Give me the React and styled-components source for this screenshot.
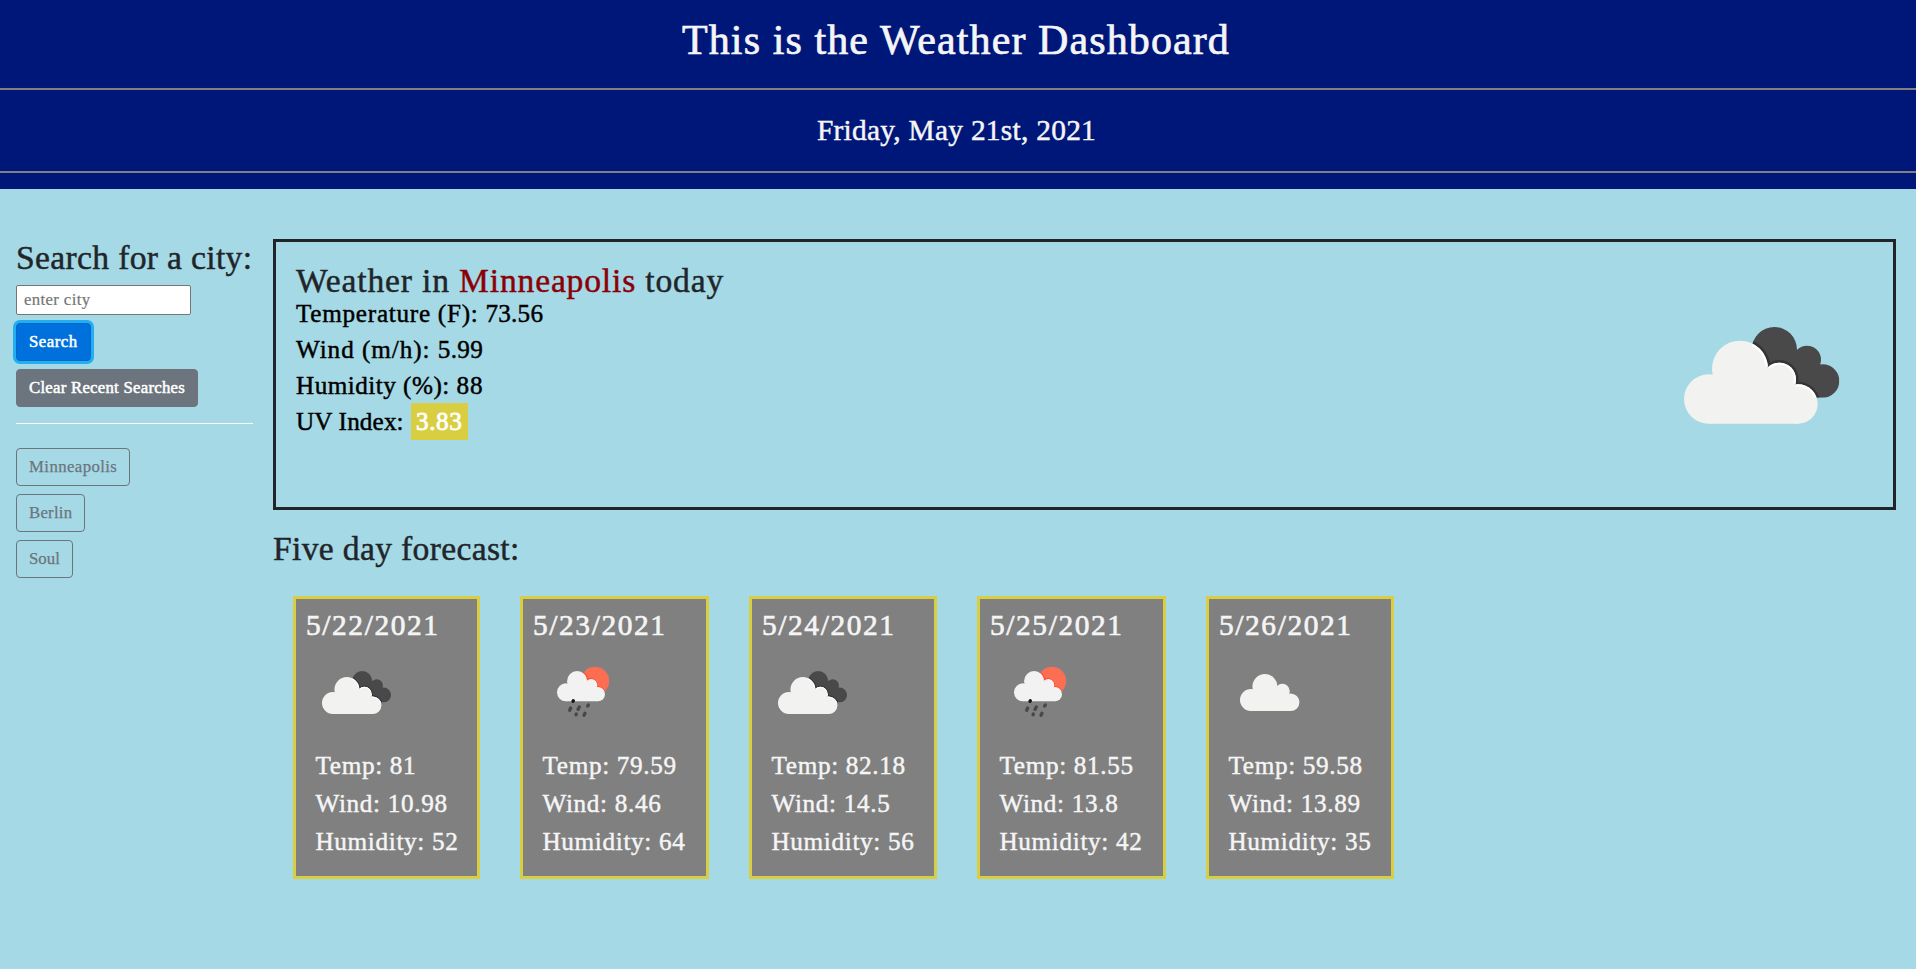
import React from 'react';
import styled, { createGlobalStyle } from 'styled-components';

const GlobalStyle = createGlobalStyle`
  *, *::before, *::after { box-sizing: border-box; }
  body {
    margin: 0;
    min-height: 100vh;
    background: #a5d9e5;
    color: #212529;
    font-family: "Liberation Serif", serif;
    font-size: 16.8px;
    -webkit-text-stroke: 0.45px currentColor;
  }
  h1, h2, h3, p, ul { margin: 0; padding: 0; font-weight: 400; }
`;

const Header = styled.header`
  height: 189px;
  background: #00177a;
  color: #f5f5f5;
  text-align: center;
`;

const Title = styled.h1`
  height: 88px;
  padding: 16px 4px 0 0;
  font-size: 42px;
  line-height: 48px;
  letter-spacing: 1.1px;
  -webkit-text-stroke-width: 0.7px;
`;

const Today = styled.p`
  height: 81px;
  padding: 23px 3px 0 0;
  font-size: 29.4px;
  line-height: 34px;
  letter-spacing: 0.27px;
`;

const HeaderRule = styled.div`
  height: 2px;
  background: #808080;
`;

const Main = styled.main`
  display: flex;
  gap: 20px;
  padding: 50px 20px 0 16px;
`;

const Sidebar = styled.aside`
  width: 237px;
  flex: none;
  display: flex;
  flex-direction: column;
  align-items: flex-start;
  gap: 8px;
`;

const Heading = styled.h2`
  font-size: 33.6px;
  line-height: 38px;
  letter-spacing: ${(p) => p.$track ?? 0.34}px;
  white-space: nowrap;
`;

const CityInput = styled.input`
  width: 175px;
  height: 30px;
  padding: 1px 7px;
  border: 1px solid #767676;
  border-radius: 2px;
  background: #fff;
  font: inherit;
  letter-spacing: 0.35px;
  -webkit-text-stroke: 0.2px currentColor;
  &::placeholder { color: #757575; opacity: 1; }
`;

const Button = styled.button`
  height: 38px;
  padding: 0 12px;
  border: 1px solid #6c757d;
  border-radius: 4px;
  background: ${(p) => (p.$outline ? 'transparent' : '#6c757d')};
  color: ${(p) => (p.$outline ? '#6c757d' : '#fff')};
  font: inherit;
  line-height: 36px;
  letter-spacing: ${(p) => p.$track ?? 0.3}px;
  -webkit-text-stroke: ${(p) => (p.$outline ? 0.25 : 0.5)}px currentColor;
`;

const SearchButton = styled(Button)`
  border-color: #0067cd;
  background: #0071dc;
  box-shadow: 0 0 0 3px #22aef0;
`;

const SideRule = styled.div`
  width: 100%;
  height: 1px;
  margin: 8px 0 16px;
  background: #fbfdfd;
`;

const Content = styled.section`
  flex: 1;
  min-width: 0;
`;

const Current = styled.article`
  height: 271px;
  display: flex;
  justify-content: space-between;
  padding: 20px;
  border: 3px solid #212529;
`;

const City = styled.span`
  color: #8b0008;
`;

const Readings = styled.ul`
  margin-top: -4px;
  list-style: none;
  color: #000;
  font-size: 25.2px;
  line-height: 36px;
`;

const Reading = styled.li`
  height: 36px;
  letter-spacing: ${(p) => p.$track}px;
`;

const Value = styled.span`
  letter-spacing: ${(p) => p.$track}px;
`;

const UvReading = styled(Reading)`
  display: flex;
  align-items: flex-start;
  gap: 7px;
`;

const UvBadge = styled.span`
  width: 57px;
  height: 37px;
  margin-top: -1px;
  line-height: 38px;
  text-align: center;
  background: #d9ce41;
  color: #fff;
  letter-spacing: 0.6px;
  -webkit-text-stroke: 0.8px currentColor;
`;

const Forecast = styled.div`
  margin-top: 20px;
`;

const Cards = styled.div`
  display: flex;
  gap: 40px;
  margin-top: 28px;
  padding-left: 20px;
`;

const Card = styled.article`
  width: ${(p) => p.$width}px;
  height: 283px;
  padding: 9px 0 0 10px;
  border: 3px solid #d9ce41;
  background: #808080;
  color: #f5f5f5;
`;

const CardDate = styled.h3`
  font-size: 29.4px;
  line-height: 34px;
  letter-spacing: 1.6px;
  -webkit-text-stroke-width: 0.65px;
`;

const CardStats = styled.div`
  padding: 4px 0 0 9.5px;
  font-size: 25.2px;
  line-height: 38px;
  letter-spacing: 0.66px;
  white-space: nowrap;
`;

const Icon = styled.svg`
  display: block;
  flex: none;
  width: ${(p) => p.$size}px;
  height: ${(p) => p.$size}px;
  margin-top: ${(p) => p.$top}px;
`;

const CloudShape = (props) => (
  <g {...props}>
    <circle cx="146" cy="507" r="74" />
    <circle cx="240" cy="416" r="84" />
    <circle cx="358" cy="448" r="50" />
    <circle cx="414" cy="522" r="59" />
    <path d="M146 581V460L200 420L300 420L358 440L414 500V581Z" />
  </g>
);

function WeatherIcon({ kind, size = 100, top = 1 }) {
  return (
    <Icon viewBox="0 0 100 100" $size={size} $top={top} aria-hidden="true">
      {kind === 'broken' && (
        <g transform="scale(0.148148) translate(36 -102)">
          <defs>
            <clipPath id={`dark-${size}`}>
              <circle cx="343" cy="359" r="68" />
              <circle cx="441" cy="389" r="42" />
              <circle cx="488" cy="453" r="50" />
              <path d="M343 340L400 350L450 390L500 430L488 503H300Z" />
            </clipPath>
            <clipPath id={`light-${size}`}>
              <circle cx="146" cy="507" r="74" />
              <circle cx="240" cy="416" r="84" />
              <circle cx="358" cy="448" r="50" />
              <circle cx="414" cy="522" r="59" />
            </clipPath>
          </defs>
          <g clipPath={`url(#dark-${size})`}>
            <path fill="#49494b" d="M260 280H550V510H260Z" />
            <g fill="none" stroke="#1c1c1e" opacity="0.45">
              <g strokeWidth="16">
                <circle cx="240" cy="416" r="84" />
                <circle cx="358" cy="448" r="50" />
                <circle cx="414" cy="522" r="59" />
              </g>
              <g strokeWidth="8">
                <circle cx="240" cy="416" r="84" />
                <circle cx="358" cy="448" r="50" />
                <circle cx="414" cy="522" r="59" />
              </g>
            </g>
          </g>
          <CloudShape fill="#f2f2f0" />
          <g clipPath={`url(#light-${size})`} fill="none" stroke="#ffffff" strokeWidth="14">
            <path d="M278 341A84 84 0 0 1 323 409" />
            <path d="M325 410A50 50 0 0 1 406 462" />
            <path d="M406 463A59 59 0 0 1 469 502" />
          </g>
        </g>
      )}
      {kind === 'scattered' && (
        <g transform="translate(5 -3) scale(0.148148) translate(36 -102)">
          <CloudShape fill="#f2f2f0" />
        </g>
      )}
      {kind === 'rain' && (
        <g transform="scale(0.333333) translate(-759 -189)">
          <circle cx="945" cy="303" r="42.5" fill="#fc6e51" />
          <g fill="none" stroke="#f8432c" strokeWidth="3">
            <path d="M912 278A31 31 0 0 1 923 298" />
            <path d="M923 298A20 20 0 0 1 952 318" />
            <path d="M953 320A23 23 0 0 1 974 333" />
          </g>
          <g transform="translate(831 364) scale(0.3591 0.3655) translate(-72 -581)">
            <CloudShape fill="#f2f2f2" />
          </g>
          <g fill="none" strokeLinecap="round" strokeWidth="10">
            <path stroke="#151515" d="M880 362L879 364" />
            <path stroke="#484848" d="M872 384L869 391M898 381L894 388M925 375L923 378M889 402L888 404M915 400L912 406" />
          </g>
        </g>
      )}
    </Icon>
  );
}

const readings = [
  { label: 'Temperature (F):', value: '73.56', track: 0.72, valueTrack: 0.2 },
  { label: 'Wind (m/h):', value: '5.99', track: 0.93, valueTrack: 0.4 },
  { label: 'Humidity (%):', value: '88', track: 0.47, valueTrack: 1 },
];

const recent = [
  { name: 'Minneapolis', track: 0.4 },
  { name: 'Berlin', track: 0.24 },
  { name: 'Soul', track: 0.04 },
];

const days = [
  { date: '5/22/2021', icon: 'broken', temp: '81', wind: '10.98', humidity: '52', width: 187 },
  { date: '5/23/2021', icon: 'rain', temp: '79.59', wind: '8.46', humidity: '64', width: 189 },
  { date: '5/24/2021', icon: 'broken', temp: '82.18', wind: '14.5', humidity: '56', width: 188 },
  { date: '5/25/2021', icon: 'rain', temp: '81.55', wind: '13.8', humidity: '42', width: 189 },
  { date: '5/26/2021', icon: 'scattered', temp: '59.58', wind: '13.89', humidity: '35', width: 188 },
];

export default function App() {
  return (
    <>
      <GlobalStyle />
      <Header>
        <Title>This is the Weather Dashboard</Title>
        <HeaderRule />
        <Today>Friday, May 21st, 2021</Today>
        <HeaderRule />
      </Header>
      <Main>
        <Sidebar>
          <Heading>Search for a city:</Heading>
          <CityInput placeholder="enter city" />
          <SearchButton $track={0.48}>Search</SearchButton>
          <Button $track={0.24}>Clear Recent Searches</Button>
          <SideRule />
          {recent.map((c) => (
            <Button key={c.name} $outline $track={c.track}>{c.name}</Button>
          ))}
        </Sidebar>
        <Content>
          <Current>
            <div>
              <Heading $track={0.83}>
                Weather in <City>Minneapolis</City> today
              </Heading>
              <Readings>
                {readings.map((r) => (
                  <Reading key={r.label} $track={r.track}>
                    {r.label} <Value $track={r.valueTrack}>{r.value}</Value>
                  </Reading>
                ))}
                <UvReading $track={0.13}>
                  <span>UV Index:</span>
                  <UvBadge>3.83</UvBadge>
                </UvReading>
              </Readings>
            </div>
            <WeatherIcon kind="broken" size={225} top={2} />
          </Current>
          <Forecast>
            <Heading>Five day forecast:</Heading>
            <Cards>
              {days.map((d) => (
                <Card key={d.date} $width={d.width}>
                  <CardDate>{d.date}</CardDate>
                  <WeatherIcon kind={d.icon} />
                  <CardStats>
                    <p>Temp: {d.temp}</p>
                    <p>Wind: {d.wind}</p>
                    <p>Humidity: {d.humidity}</p>
                  </CardStats>
                </Card>
              ))}
            </Cards>
          </Forecast>
        </Content>
      </Main>
    </>
  );
}
